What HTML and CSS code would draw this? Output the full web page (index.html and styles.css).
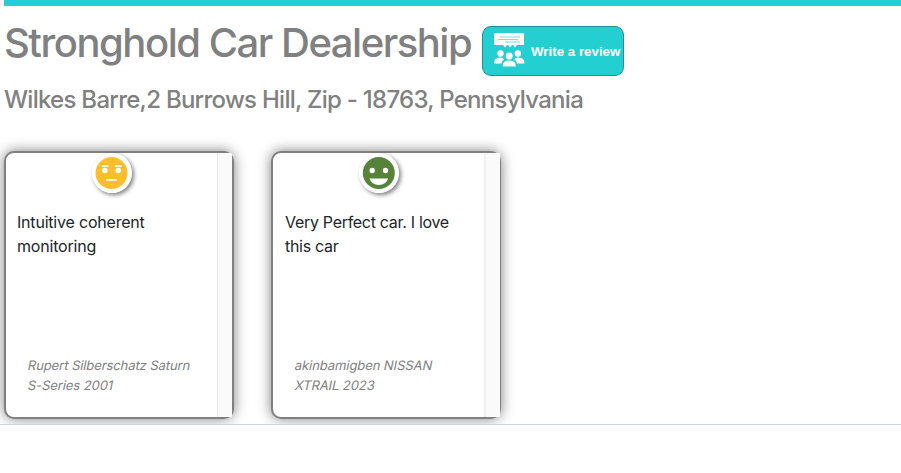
FILE: index.html
```html
<!DOCTYPE html>
<html lang="en">
<head>
<meta charset="utf-8">
<title>Stronghold Car Dealership</title>
<link rel="stylesheet" href="styles.css">
</head>
<body>
<div class="bar"></div>
<header>
  <div class="title-row">
    <h1>Stronghold Car Dealership</h1>
    <a class="review-button">
      <svg width="32" height="36" viewBox="0 0 32 36" fill="#fff">
        <path d="M2 1h28q1 0 1 1v10q0 1-1 1h-6l-2 2.500-2-2.500h-1l-2 2.500-2-2.500h-1l-2 2.500-2-2.500H2q-1 0-1-1V2q0-1 1-1z"/>
        <path d="M7 5h20M5 7.500h20M12 10h15" stroke="#75dfe1" stroke-width="1"/>
        <circle cx="7.500" cy="21.500" r="3.200"/><circle cx="24.800" cy="21.500" r="3.200"/>
        <path d="M1 31.500q0-6 6-6 3 0 4.200 2Q8.500 29 8.500 31.500zM31.500 31.500q0-6-6-6-3 0-4.200 2Q24 29 24 31.500z"/>
        <circle cx="16.200" cy="24" r="3.500"/>
        <path d="M9.700 34.500v-1q0-5 6.500-5t6.500 5v1z"/>
      </svg>
      <b>Write a review</b>
    </a>
  </div>
  <h2>Wilkes Barre,2 Burrows Hill, Zip - 18763, Pennsylvania</h2>
</header>
<main class="reviews">
  <article class="card">
    <div class="body">
      <svg class="face" width="40" height="40" viewBox="0 0 40 40">
        <circle cx="20" cy="20" r="20" fill="#fff"/>
        <circle cx="19.500" cy="20" r="16" fill="#fdbe2c"/>
        <path d="M9.500 13h7M23 13h7M14 27h11" stroke="#fff" stroke-width="1.700"/>
        <circle cx="12.800" cy="17.500" r="2.700" fill="#fff"/><circle cx="26.300" cy="17.500" r="2.700" fill="#fff"/>
      </svg>
      <p class="text">Intuitive coherent<br>monitoring</p>
      <p class="author"><span>Rupert Silberschatz Saturn</span><span>S-Series 2001</span></p>
    </div>
    <div class="track"></div>
  </article>
  <article class="card second">
    <div class="body">
      <svg class="face" width="40" height="40" viewBox="0 0 40 40">
        <circle cx="20" cy="20" r="20" fill="#fff"/>
        <circle cx="19.800" cy="20" r="16" fill="#568239"/>
        <circle cx="13.200" cy="17.500" r="2.700" fill="#fff"/><circle cx="26.500" cy="17.500" r="2.700" fill="#fff"/>
        <path d="M10.500 25.500h18.600q-2 6.500-9.300 6.500t-9.300-6.500z" fill="#fff"/>
      </svg>
      <p class="text">Very Perfect car. I love<br>this car</p>
      <p class="author"><span>akinbamigben NISSAN</span><span>XTRAIL 2023</span></p>
    </div>
    <div class="track"></div>
  </article>
</main>
</body>
</html>
```
FILE: styles.css
```css
* { box-sizing: border-box; }
body { margin: 0; background: #fff; color: #212529; font-family: Inter, sans-serif; }
.bar { height: 6px; margin-left: 4px; background: #24cfd1; }
header { padding: 20px 0 0 4px; color: #808080; height: 117px; }
.title-row { display: flex; height: 50px; }
h1, h2, p { margin: 0; white-space: nowrap; }
h1 { width: 478px; font-size: 40px; font-weight: 500; line-height: 33px; letter-spacing: -1.47px; }
h2 { font-size: 24px; font-weight: 500; line-height: 29px; padding-top: 9px; letter-spacing: -0.73px; }
.review-button {
  display: flex; align-items: center; width: 142px; height: 50px; padding-left: 10px; gap: 6px;
  border: 1px solid #258d9d; border-radius: 9px; background: #24cfd1; color: #fff;
  font: 13.333px "Liberation Sans", sans-serif; white-space: nowrap;
}
.review-button svg { flex: none; margin-top: -3px; }
.reviews { display: flex; gap: 37px; height: 302px; padding: 28px 0 0 4px; border-bottom: 1px solid #cfd6e1; overflow: hidden; }
.card { display: flex; width: 230px; height: 268px; border: 2px solid #808080; border-radius: 10px; box-shadow: 0 0 13px rgba(0,0,0,.5); background: #fff; }
.second { border-right-width: 1px; }
.body { flex: 1; display: flex; flex-direction: column; padding-left: 11px; }
.track { flex: none; width: 15px; background: #fafafa; border-left: 1px solid #e5e5e5; }
.second .track { width: 16px; border-left: 2px solid #f0f0f0; }
.face { margin-left: 75px; border-radius: 50%; box-shadow: 2px 2px 4px rgba(0,0,0,.5); }
.text { margin-top: 17px; font-size: 16px; line-height: 24px; letter-spacing: -0.2px; }
.second .text { letter-spacing: -0.3px; padding-left: 1px; }
.author { margin: 98px 0 0 11px; color: #808080; font-size: 13px; line-height: 19.5px; }
.author span { display: block; width: max-content; transform: skewX(-12deg); letter-spacing: -0.08px; }
```
